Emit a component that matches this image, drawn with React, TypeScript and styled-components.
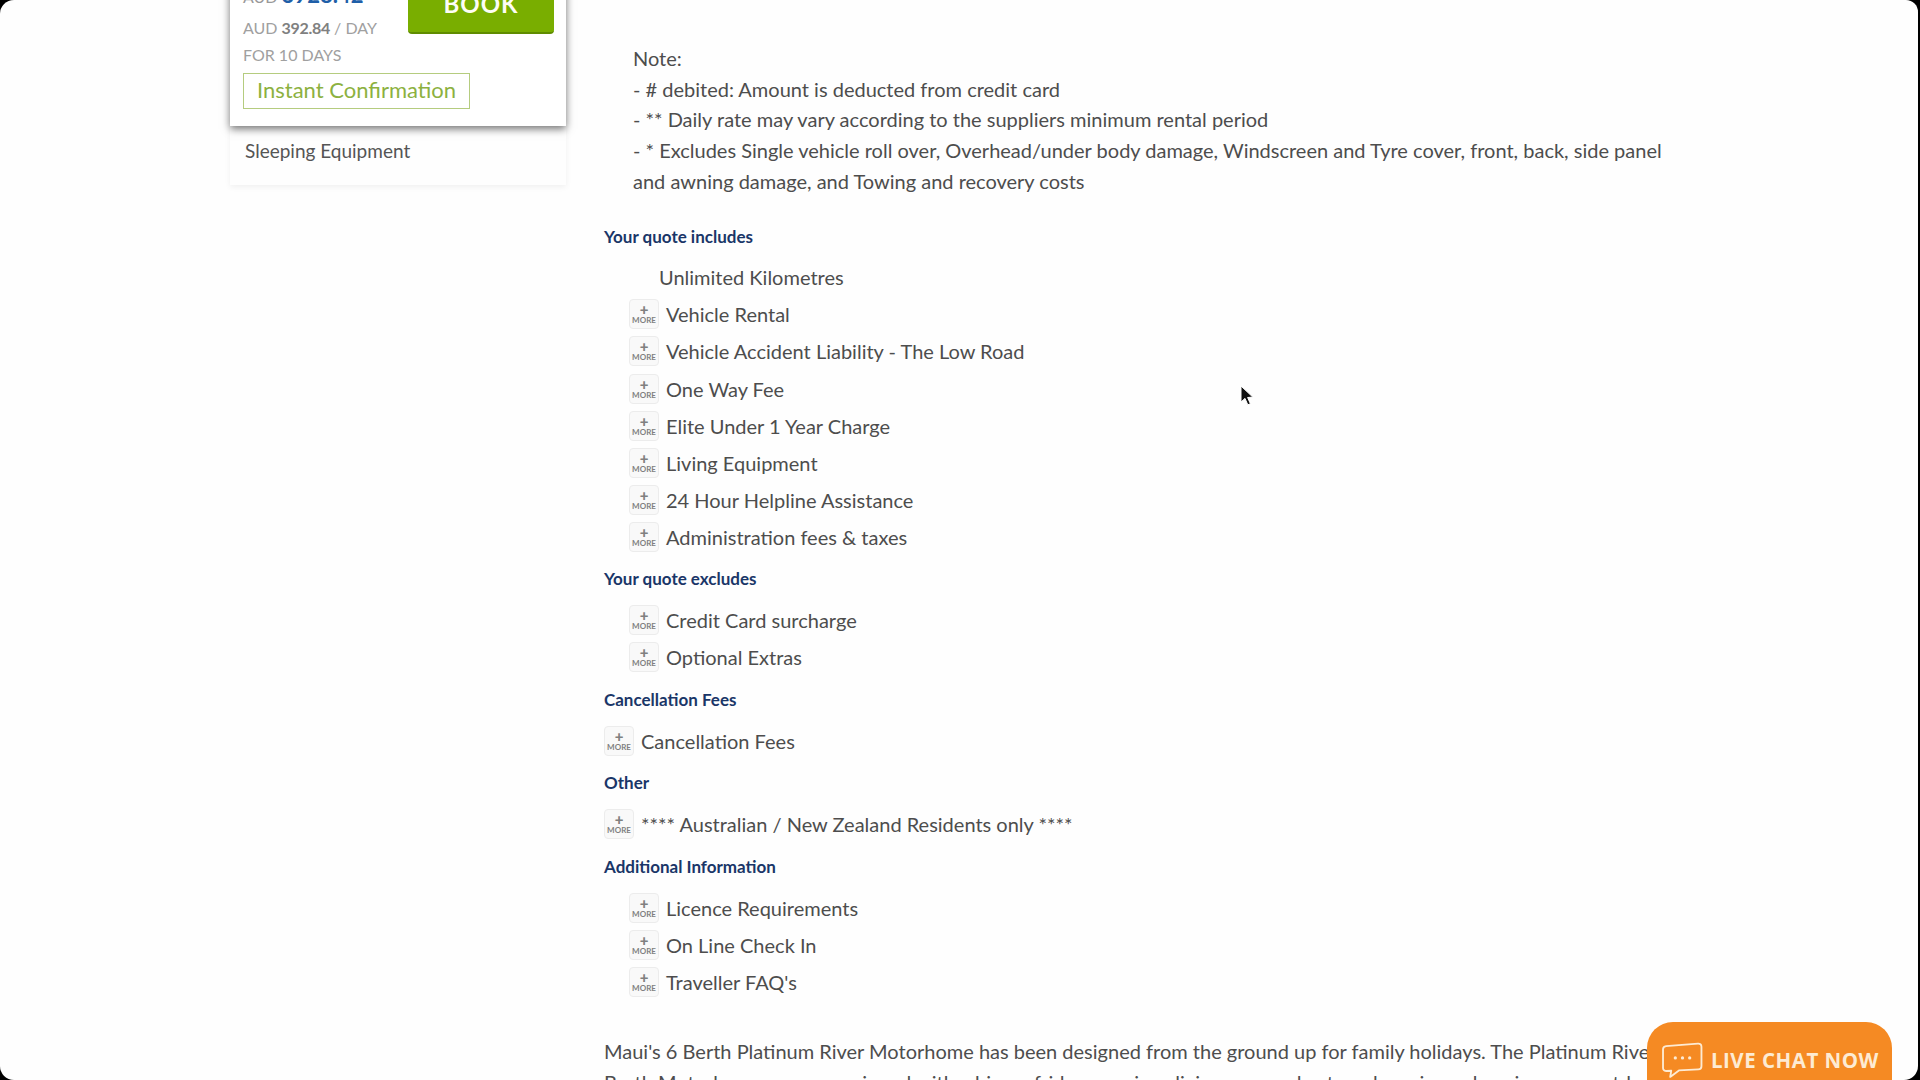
import styled, { createGlobalStyle } from 'styled-components'

const GlobalStyle = createGlobalStyle`
	html, body {
		margin: 0;
		padding: 0;
		background: #000;
	}
	body {
		font-family: Lato, "Noto Sans", sans-serif;
		color: #4d4d4d;
	}
`

type Section = {
	title: string
	items: string[]
	flush?: boolean
	plain?: string
}

const sections: Section[] = [
	{
		title: 'Your quote includes',
		plain: 'Unlimited Kilometres',
		items: [
			'Vehicle Rental',
			'Vehicle Accident Liability - The Low Road',
			'One Way Fee',
			'Elite Under 1 Year Charge',
			'Living Equipment',
			'24 Hour Helpline Assistance',
			'Administration fees & taxes',
		],
	},
	{
		title: 'Your quote excludes',
		items: ['Credit Card surcharge', 'Optional Extras'],
	},
	{ title: 'Cancellation Fees', items: ['Cancellation Fees'], flush: true },
	{
		title: 'Other',
		items: ['**** Australian / New Zealand Residents only ****'],
		flush: true,
	},
	{
		title: 'Additional Information',
		items: ['Licence Requirements', 'On Line Check In', "Traveller FAQ's"],
	},
]

const App = () => {
	return (
		<Page>
			<GlobalStyle />
			<Sidebar>
				<PriceCard>
					<PriceColumn>
						<Total>
							AUD <strong>3928.42</strong>
						</Total>
						<Rate>
							AUD <b>392.84</b> / DAY
						</Rate>
						<Rate>FOR 10 DAYS</Rate>
					</PriceColumn>
					<BookButton>BOOK</BookButton>
					<Confirmation>Instant Confirmation</Confirmation>
				</PriceCard>
				<ExtrasCard>Sleeping Equipment</ExtrasCard>
			</Sidebar>
			<Main>
				<Note>
					Note:
					<br />- # debited: Amount is deducted from credit card
					<br />- ** Daily rate may vary according to the suppliers minimum rental period
					<br />- * Excludes Single vehicle roll over, Overhead/under body damage, Windscreen
					and Tyre cover, front, back, side panel and awning damage, and Towing and
					recovery costs
				</Note>
				{sections.map((section) => (
					<div key={section.title}>
						<Heading>{section.title}</Heading>
						<List $flush={section.flush}>
							{section.plain && <PlainRow>{section.plain}</PlainRow>}
							{section.items.map((item) => (
								<Row key={item}>
									<MoreBadge>
										<span>+</span>
										<small>MORE</small>
									</MoreBadge>
									{item}
								</Row>
							))}
						</List>
					</div>
				))}
				<Description>
					Maui's 6 Berth Platinum River Motorhome has been designed from the ground up for
					family holidays. The Platinum River 6 Berth Motorhome comes equipped with a bigger
					fridge, spacious living area and external awning enhancing your outdoor experience
					on the road.
				</Description>
			</Main>
			<Cursor viewBox="0 0 14 22">
				<path
					d="M1 1v16l4-3.6 2.8 6.4 2.6-1.1-2.8-6.2 5.2-.4z"
					fill="#111"
					stroke="#fff"
					strokeWidth="1"
				/>
			</Cursor>
			<ChatButton>
				<svg width="41" height="37" viewBox="0 0 40 35" fill="none">
					<path
						d="M4 3.500 35 1c2-.2 3.500 1 3.500 3v19c0 2-1.200 3-3 3.100l-19 1.100-8.500 6.300 1-6-4.500.2c-2 0-3.500-1-3.500-3V6.500c0-2 1-2.800 3-3z"
						stroke="#fdebd3"
						strokeWidth="1.800"
						strokeLinejoin="round"
					/>
					<circle cx="13" cy="15" r="1.600" fill="#fdebd3" />
					<circle cx="20" cy="15" r="1.600" fill="#fdebd3" />
					<circle cx="27" cy="15" r="1.600" fill="#fdebd3" />
				</svg>
				LIVE CHAT NOW
			</ChatButton>
		</Page>
	)
}

export default App

const Page = styled.div`
	position: relative;
	display: flex;
	width: 1918px;
	height: 1080px;
	overflow: hidden;
	padding-left: 230px;
	box-sizing: border-box;
	background: #fefefe;
	border-radius: 14px 12px 14px 14px;
`

const Sidebar = styled.aside`
	width: 336px;
	flex-shrink: 0;
`

const PriceCard = styled.div`
	position: relative;
	z-index: 1;
	display: grid;
	grid-template-columns: 165px 146px;
	grid-template-rows: 118px auto;
	justify-content: space-between;
	height: 176px;
	margin-top: -50px;
	padding: 0 14px 0 13px;
	box-sizing: border-box;
	background: #fff;
	box-shadow: 0 3px 8px rgba(0, 0, 0, 0.55);
`

const PriceColumn = styled.div`
	display: flex;
	flex-direction: column;
	justify-content: flex-end;
	white-space: nowrap;
`

const Total = styled.div`
	margin-bottom: 3px;
	line-height: 30px;
	font-size: 16px;
	color: #999;

	strong {
		font-size: 22px;
		font-weight: 700;
		color: #1f5fa8;
	}
`

const Rate = styled.div`
	font-size: 16px;
	line-height: 26.500px;
	color: #a0a0a0;

	b {
		color: #808080;
		font-weight: 700;
		letter-spacing: -0.3px;
	}
`

const BookButton = styled.div`
	display: flex;
	align-items: flex-end;
	justify-content: center;
	height: 84px;
	padding-bottom: 14px;
	box-sizing: border-box;
	border-radius: 4px;
	border-bottom: 2px solid #5f8c00;
	background: #79ae00;
	font-size: 24px;
	font-weight: 700;
	color: #fdfdf5;
	letter-spacing: 1px;
`

const Confirmation = styled.div`
	grid-column: 1 / -1;
	justify-self: start;
	margin-top: 5px;
	padding: 0 13px;
	height: 36px;
	line-height: 32px;
	box-sizing: border-box;
	border: 1px solid #b5cc7f;
	font-size: 22px;
	color: #8cb13f;
`

const ExtrasCard = styled.div`
	height: 59px;
	padding: 13px 15px;
	box-sizing: border-box;
	font-size: 19px;
	line-height: 24px;
	color: #555;
	box-shadow: 0 2px 6px rgba(0, 0, 0, 0.06);
`

const Main = styled.main`
	width: 1060px;
	margin-left: 38px;
	padding-top: 43px;
	font-size: 20px;
`

const Note = styled.p`
	margin: 0 0 17px 29px;
	line-height: 30.700px;
`

const Heading = styled.h4`
	margin: 1px 0 -0.700px;
	font-size: 17px;
	line-height: 46px;
	font-weight: 700;
	color: #1a3668;
`

const List = styled.div<{ $flush?: boolean }>`
	padding-left: ${(p) => (p.$flush ? '0' : '25px')};
`

const Row = styled.div`
	display: flex;
	align-items: center;
	gap: 7px;
	height: 37.100px;
`

const PlainRow = styled.div`
	height: 37px;
	line-height: 37px;
	padding-left: 30px;
`

const MoreBadge = styled.div`
	display: flex;
	flex-direction: column;
	align-items: center;
	justify-content: center;
	width: 30px;
	height: 30px;
	box-sizing: border-box;
	border: 1px solid #ececec;
	border-radius: 4px;
	background: #f9f9f9;
	color: #808080;
	line-height: 1;

	span {
		font-size: 15px;
		font-weight: 900;
		line-height: 10px;
	}

	small {
		font-size: 8px;
		font-weight: 700;
		margin-top: 2px;
	}
`

const Description = styled.p`
	margin: 36px 0 0;
	line-height: 31px;
	width: 1100px;
`

const Cursor = styled.svg`
	position: absolute;
	left: 1240px;
	top: 385px;
	width: 14px;
	height: 22px;
`

const ChatButton = styled.div`
	position: absolute;
	left: 1647px;
	top: 1022px;
	display: flex;
	align-items: center;
	gap: 8px;
	width: 245px;
	height: 70px;
	padding: 6px 12px 0 15px;
	box-sizing: border-box;
	border-radius: 26px 26px 0 0;
	background: #f58a23;
	font-family: "Open Sans", sans-serif;
	font-size: 20.500px;
	font-weight: 700;
	letter-spacing: 0.500px;
	color: #fdebd3;
	white-space: nowrap;
`
